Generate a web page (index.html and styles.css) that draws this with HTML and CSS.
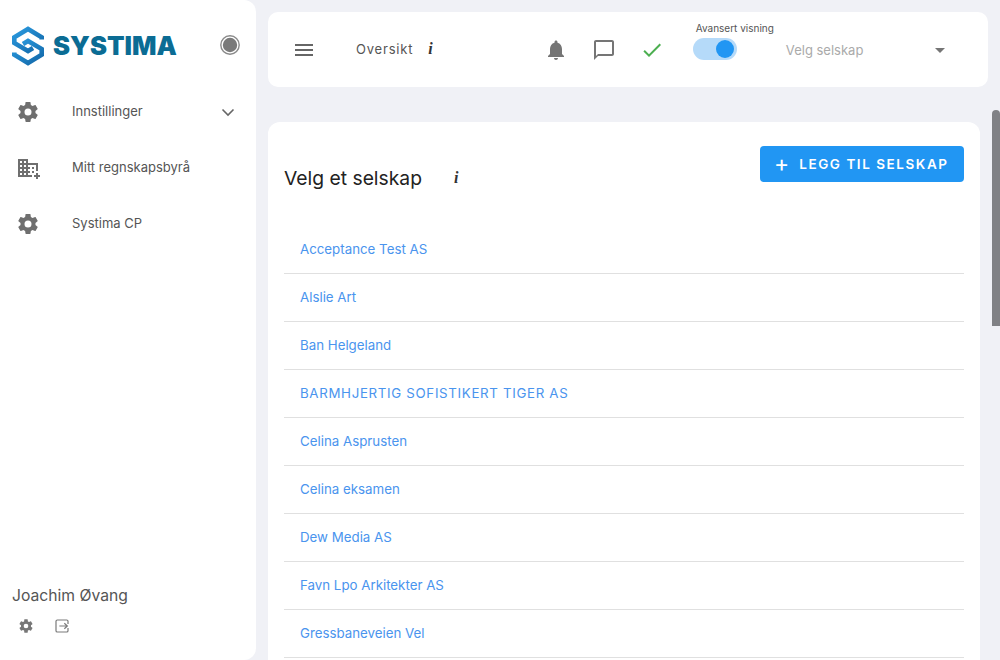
FILE: index.html
```html
<!DOCTYPE html>
<html lang="no">
<head>
<meta charset="utf-8">
<title>Systima</title>
<link rel="stylesheet" href="styles.css">
</head>
<body>
<svg class="defs" width="0" height="0">
  <defs>
    <path id="gear" d="M12,15.5A3.5,3.5 0 0,1 8.5,12A3.5,3.5 0 0,1 12,8.5A3.5,3.5 0 0,1 15.5,12A3.5,3.5 0 0,1 12,15.5M19.43,12.97C19.47,12.65 19.5,12.33 19.5,12C19.5,11.67 19.47,11.34 19.43,11L21.54,9.37C21.73,9.22 21.78,8.95 21.66,8.73L19.66,5.27C19.54,5.05 19.27,4.96 19.05,5.05L16.56,6.05C16.04,5.66 15.5,5.32 14.87,5.07L14.5,2.42C14.46,2.18 14.25,2 14,2H10C9.75,2 9.54,2.18 9.5,2.42L9.13,5.07C8.5,5.32 7.96,5.66 7.44,6.05L4.95,5.05C4.73,4.96 4.46,5.05 4.34,5.27L2.34,8.73C2.21,8.95 2.27,9.22 2.46,9.37L4.57,11C4.53,11.34 4.5,11.67 4.5,12C4.5,12.33 4.53,12.65 4.57,12.97L2.46,14.63C2.27,14.78 2.21,15.05 2.34,15.27L4.34,18.73C4.46,18.95 4.73,19.03 4.95,18.95L7.44,17.94C7.96,18.34 8.5,18.68 9.13,18.93L9.5,21.58C9.54,21.82 9.75,22 10,22H14C14.25,22 14.46,21.82 14.5,21.58L14.87,18.93C15.5,18.67 16.04,18.34 16.56,17.94L19.05,18.95C19.27,19.03 19.54,18.95 19.66,18.73L21.66,15.27C21.78,15.05 21.73,14.78 21.54,14.63L19.43,12.97Z"/>
    <linearGradient id="logoGrad" x1="0" y1="0" x2="1" y2="1">
      <stop offset="0" stop-color="#2b9be0"/>
      <stop offset="1" stop-color="#1267a8"/>
    </linearGradient>
  </defs>
</svg>
<div class="app">
  <aside class="sidebar">
    <div class="brand">
      <svg class="logo-mark" viewBox="0 0 32 40" width="32" height="40" fill="none" stroke="url(#logoGrad)" stroke-width="4.600">
        <path d="M29.700 13.500 V11.400 L16 3 L2.300 11.400 V17 L16 25 L21 22"/>
        <path d="M2.300 26.500 V28.600 L16 37 L29.700 28.600 V23 L16 15 L11 18"/>
      </svg>
      <span class="logo-text">SYSTIMA</span>
      <svg class="radio" viewBox="0 0 20 20" width="20" height="20">
        <circle cx="10" cy="10" r="9.200" fill="none" stroke="#8a8a8a" stroke-width="1.400"/>
        <circle cx="10" cy="10" r="7.200" fill="#7a7a7a"/>
      </svg>
    </div>
    <nav class="nav">
      <a class="nav-item">
        <svg class="nav-icon" viewBox="0 0 24 24"><use href="#gear"/></svg>
        <span class="nav-label">Innstillinger</span>
        <svg class="nav-chevron" viewBox="0 0 24 24"><path d="M6.500 9.500 12 15l5.500-5.500"/></svg>
      </a>
      <a class="nav-item">
        <svg class="nav-icon" viewBox="0 0 24 24"><path d="M12 7V3H2v18h14v-2h-4v-2h2v-2h-2v-2h2v-2h-2V9h8v6h2V7H12zM6 19H4v-2h2v2zm0-4H4v-2h2v2zm0-4H4V9h2v2zm0-4H4V5h2v2zm4 12H8v-2h2v2zm0-4H8v-2h2v2zm0-4H8V9h2v2zm0-4H8V5h2v2zm14 12v2h-2v2h-2v-2h-2v-2h2v-2h2v2h2zm-6-8h-2v2h2v-2zm0 4h-2v2h2v-2z"/></svg>
        <span class="nav-label">Mitt regnskapsbyrå</span>
      </a>
      <a class="nav-item">
        <svg class="nav-icon" viewBox="0 0 24 24"><use href="#gear"/></svg>
        <span class="nav-label">Systima CP</span>
      </a>
    </nav>
    <div class="user">
      <div class="user-name">Joachim Øvang</div>
      <div class="user-actions">
        <svg class="user-icon" viewBox="0 0 24 24"><use href="#gear"/></svg>
        <svg class="user-icon logout" viewBox="0 0 24 24"><path d="M21 9V5a2 2 0 0 0-2-2H5a2 2 0 0 0-2 2v14a2 2 0 0 0 2 2h14a2 2 0 0 0 2-2v-4"/><path d="M8 12h12M15.500 7.800 20 12l-4.500 4.200"/></svg>
      </div>
    </div>
  </aside>
  <main class="main">
    <div class="content">
      <header class="topbar">
        <svg class="menu-icon" viewBox="0 0 24 24"><path d="M3 18h18v-2H3v2zm0-5h18v-2H3v2zm0-7v2h18V6H3z"/></svg>
        <span class="page-title">Oversikt</span>
        <span class="info info-top">i</span>
        <div class="top-icons">
          <svg class="top-icon" viewBox="0 0 24 24"><path d="M12 22c1.100 0 2-.9 2-2h-4c0 1.100.9 2 2 2zm6-6v-5c0-3.070-1.630-5.640-4.500-6.320V4c0-.83-.67-1.500-1.500-1.500s-1.500.67-1.500 1.500v.68C7.640 5.360 6 7.920 6 11v5l-2 2v1h16v-1l-2-2z"/></svg>
          <svg class="top-icon" viewBox="0 0 24 24"><path d="M20 2H4c-1.100 0-2 .9-2 2v18l4-4h14c1.100 0 2-.9 2-2V4c0-1.100-.9-2-2-2zm0 14H6l-2 2V4h16v12z"/></svg>
          <svg class="top-icon check" viewBox="0 0 24 24"><path d="M9 16.170 4.830 12l-1.410 1.410L9 19 21 7l-1.410-1.410z"/></svg>
        </div>
        <div class="switch-box">
          <span class="switch-label">Avansert visning</span>
          <span class="switch"><span class="switch-knob"></span></span>
        </div>
        <div class="company-select">
          <span class="select-text">Velg selskap</span>
          <svg class="select-arrow" viewBox="0 0 24 24"><path d="M7 10l5 5 5-5z"/></svg>
        </div>
      </header>
      <section class="card">
        <div class="card-head">
          <h1 class="card-title">Velg et selskap</h1>
          <span class="info info-card">i</span>
          <button class="add-btn" type="button"><span class="plus">+</span>LEGG TIL SELSKAP</button>
        </div>
        <ul class="company-list">
          <li class="company">Acceptance Test AS</li>
          <li class="company">Alslie Art</li>
          <li class="company">Ban Helgeland</li>
          <li class="company company-caps">BARMHJERTIG SOFISTIKERT TIGER AS</li>
          <li class="company">Celina Asprusten</li>
          <li class="company">Celina eksamen</li>
          <li class="company">Dew Media AS</li>
          <li class="company">Favn Lpo Arkitekter AS</li>
          <li class="company">Gressbaneveien Vel</li>
        </ul>
      </section>
    </div>
    <div class="rail"><div class="thumb"></div></div>
  </main>
</div>
</body>
</html>
```
FILE: styles.css
```css
* { box-sizing: border-box; }
html, body { margin: 0; height: 100%; overflow: hidden; }
body { background: #f0f1f6; font-family: Inter, "Liberation Sans", sans-serif; color: #555; }
.defs { position: absolute; }
.app { display: flex; height: 660px; overflow: hidden; }

.sidebar { width: 256px; height: 660px; flex: none; background: #fff; border-radius: 0 12px 12px 0; display: flex; flex-direction: column; }
.brand { display: flex; height: 84px; padding: 14px 16px 0 12px; align-items: flex-start; }
.logo-mark { flex: none; margin-top: 12px; }
.logo-text { margin: 18px 0 0 9px; font-size: 25.600px; font-weight: 900; color: #0b6c94; letter-spacing: 0; line-height: 27px; }
.radio { margin: 21px 0 0 auto; }
.nav { display: flex; flex-direction: column; }
.nav-item { display: flex; align-items: center; height: 56px; padding-left: 16px; }
.nav-icon { width: 24px; height: 24px; fill: #6f6f6f; flex: none; }
.nav-label { margin: -2px 0 0 32px; font-size: 13px; color: #555; }
.nav-chevron { width: 24px; height: 24px; fill: none; stroke: #666; stroke-width: 1.600; margin-left: auto; margin-right: 16px; }
.user { margin-top: auto; padding: 0 0 26px 12px; }
.user-name { font-size: 15.700px; color: #555; line-height: 20px; }
.user-actions { display: flex; gap: 20px; padding: 12px 0 0 6px; }
.user-icon { width: 16px; height: 16px; fill: #777; }
.logout { fill: none; stroke: #7a7a7a; stroke-width: 1.800; }

.main { flex: 1; display: flex; padding-left: 12px; min-width: 0; }
.content { width: 720px; flex: none; padding-top: 12px; }
.topbar { height: 75px; background: #fff; border-radius: 10px; display: flex; align-items: center; padding-left: 24px; }
.menu-icon { width: 24px; height: 24px; fill: #666; flex: none; }
.page-title { margin-left: 40px; font-size: 13px; letter-spacing: 0.800px; color: #555; margin-top: -2px; }
.info { font-family: "Liberation Serif", serif; font-style: italic; font-weight: 700; color: #333; }
.info-top { margin-left: 15px; font-size: 16px; margin-top: -2px; }
.top-icons { display: flex; gap: 24px; margin-left: 111px; align-items: center; }
.top-icon { width: 24px; height: 24px; fill: #757575; flex: none; }
.check { fill: #4caf50; }
.switch-box { display: flex; flex-direction: column; margin-left: 29px; align-self: flex-start; padding-top: 10px; }
.switch-label { font-size: 10px; color: #555; line-height: 12px; margin-left: 3px; }
.switch { width: 44px; height: 22px; border-radius: 11px; background: #b5daf9; margin-top: 4px; display: flex; align-items: center; justify-content: flex-end; padding-right: 3px; }
.switch-knob { width: 18px; height: 18px; border-radius: 50%; background: #2196f3; }
.company-select { display: flex; align-items: center; margin-left: 12px; width: 166px; }
.select-text { font-size: 13px; color: #aaa; }
.select-arrow { width: 24px; height: 24px; fill: #757575; margin-left: auto; }

.card { width: 712px; margin-top: 35px; height: 600px; background: #fff; border-radius: 12px; padding: 24px 16px 0; }
.card-head { display: flex; align-items: flex-start; height: 80px; }
.card-title { margin: 20px 0 0; font-size: 19.300px; font-weight: 400; color: #222; line-height: 24px; }
.info-card { margin: 23px 0 0 32px; font-size: 16px; line-height: 18px; }
.add-btn { margin-left: auto; width: 204px; height: 36px; border: 0; border-radius: 4px; background: #2196f3; color: #fff; font: 600 13.500px Inter, "Liberation Sans", sans-serif; letter-spacing: 1.550px; display: flex; align-items: center; padding: 0 0 0 14px; }
.plus { font-size: 23px; font-weight: 400; margin-right: 10px; line-height: 1; letter-spacing: 0; }
.company-list { list-style: none; margin: 0; padding: 0; }
.company { height: 48px; display: flex; align-items: center; padding: 0 0 2px 16px; border-bottom: 1px solid #e0e0e0; font-size: 13.300px; color: #4a94ee; }
.company-caps { letter-spacing: 0.670px; }

.rail { width: 8px; flex: none; margin-left: 4px; padding-top: 110px; }
.thumb { height: 216px; background: #808185; border-radius: 4px 4px 0 0; }
```
